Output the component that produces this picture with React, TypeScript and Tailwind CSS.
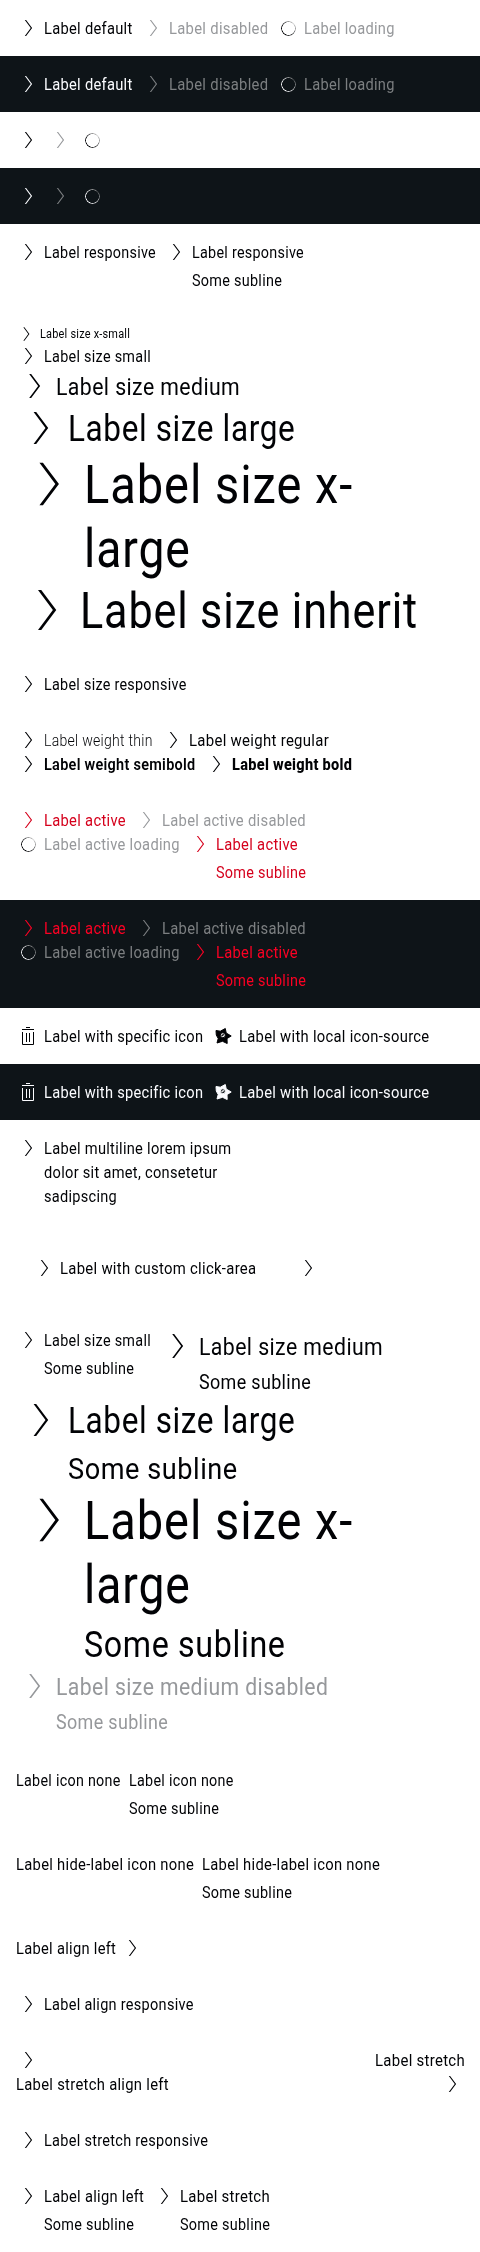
import { useLayoutEffect, useRef, useState, type ReactNode } from "react";

/* Single line of text condensed or widened to the given advance width. */
function Fit({ w, children, className = "" }: { w: number; children: string; className?: string }) {
  const ref = useRef<HTMLSpanElement>(null);
  const [scale, setScale] = useState(1);
  useLayoutEffect(() => {
    if (ref.current) setScale(w / ref.current.offsetWidth);
  }, [w]);
  return (
    <span className={`block whitespace-nowrap ${className}`} style={{ width: w }}>
      <span
        ref={ref}
        className="inline-block origin-left align-top tracking-[0.02em]"
        style={{ transform: `scaleX(${scale})` }}
      >
        {children}
      </span>
    </span>
  );
}

type Size = "xs" | "sm" | "md" | "lg" | "xl" | "inherit";
type IconName = "chevron" | "spinner" | "trash" | "star" | "none";

const boxClass: Record<Size, string> = {
  xs: "size-5",
  sm: "size-6",
  md: "size-9",
  lg: "size-12",
  xl: "size-16",
  inherit: "size-15",
};
const textClass: Record<Size, string> = {
  xs: "text-[12.5px] leading-5",
  sm: "translate-y-px text-[16px] leading-6",
  md: "translate-y-px text-[24px] leading-9",
  lg: "text-[37.5px] leading-12",
  xl: "translate-y-px text-[54px] leading-16",
  inherit: "translate-y-px text-[49.5px] leading-15",
};
const subClass: Record<Size, string> = {
  xs: "text-[12px] leading-5",
  sm: "translate-y-px pt-1 text-[16px] leading-6",
  md: "pt-1 text-[20px] leading-7",
  lg: "translate-y-px pt-1 text-[30px] leading-10",
  xl: "translate-y-px pt-1 text-[37px] leading-12",
  inherit: "",
};

function Icon({ name, size }: { name: IconName; size: Size }) {
  if (name === "none") return null;
  const box = `${boxClass[size]} block shrink-0`;
  if (name === "spinner")
    return (
      <span className={`${box} p-[5px] pb-1`}>
        <span className="block size-[15px] rounded-full bg-[conic-gradient(from_40deg,#9b9b9b55_0deg,currentColor_170deg,currentColor_230deg,#9b9b9bcc_340deg,#9b9b9b88_360deg)] mask-[radial-gradient(circle,transparent_6.1px,black_6.7px)]" />
      </span>
    );
  if (name === "trash")
    return (
      <svg viewBox="0 0 24 24" className={box} fill="none" stroke="currentColor">
        <path d="M10 3.5h4M6 5.5h12M6.5 8v12.5h11V8M10.5 9v9M13.5 9v9" />
      </svg>
    );
  if (name === "star")
    return (
      <svg viewBox="0 0 24 24" className={box} fill="currentColor">
        <path
          fillRule="evenodd"
          stroke="currentColor"
          strokeLinejoin="round"
          strokeWidth="1"
          d="M5 6.5 9.3 7.2 14.3 4.5 15.2 9 20.2 12 16 14.500 16.200 19.500 11.500 17.300 6 19 7.200 14.500 5.300 11zM9.300 11.200a2.500 2.500 0 1 0 5 0 2.500 2.500 0 0 0-5 0z"
        />
        <path d="M10.400 10.700h1.200v-.9h1.200v1.600h-1v.8h-1.400z" />
      </svg>
    );
  return (
    <svg viewBox="0 0 24 24" className={box} fill="currentColor">
      <path d="M8.800 4h1.300L16.100 12l-6 8H8.800l5.950-8z" />
    </svg>
  );
}

type LinkProps = {
  lines?: [string, number][];
  sub?: number;
  size?: Size;
  icon?: IconName;
  color?: string;
  iconColor?: string;
  weight?: string;
  className?: string;
};

function PureLink({
  lines = [],
  sub,
  size = "sm",
  icon = "chevron",
  color = "",
  iconColor = "",
  weight = "font-normal",
  className = "",
}: LinkProps) {
  return (
    <a className={`flex items-start gap-1 ${color} ${className}`}>
      {icon !== "none" && (
        <span className={iconColor}>
          <Icon name={icon} size={size} />
        </span>
      )}
      {lines.length > 0 && (
        <span className={weight}>
          {lines.map(([t, w]) => (
            <Fit key={t} w={w} className={textClass[size]}>
              {t}
            </Fit>
          ))}
          {sub && (
            <Fit w={sub} className={subClass[size]}>
              Some subline
            </Fit>
          )}
        </span>
      )}
    </a>
  );
}

function Section({ dark, className = "", children }: { dark?: boolean; className?: string; children: ReactNode }) {
  return (
    <div className={`p-4 ${dark ? "bg-[#0e1418] text-[#fbfcff]" : "bg-white text-[#010205]"} ${className}`}>{children}</div>
  );
}

const Row = ({ children, className = "" }: { children: ReactNode; className?: string }) => (
  <div className={`flex items-start gap-2 ${className}`}>{children}</div>
);

const mutedOf = (dark?: boolean) => (dark ? "text-[#7c7f81]" : "text-[#96989b]");

function States({ dark }: { dark?: boolean }) {
  const m = mutedOf(dark);
  return (
    <Section dark={dark}>
      <Row>
        <PureLink lines={[["Label default", 89]]} />
        <PureLink lines={[["Label disabled", 99]]} color={m} />
        <PureLink
          lines={[["Label loading", 90.5]]}
          icon="spinner"
          color={m}
          iconColor={dark ? "text-[#fbfcff]" : "text-[#010205]"}
        />
      </Row>
    </Section>
  );
}

function HiddenLabels({ dark }: { dark?: boolean }) {
  return (
    <Section dark={dark}>
      <Row>
        <PureLink />
        <PureLink color={mutedOf(dark)} />
        <PureLink icon="spinner" />
      </Row>
    </Section>
  );
}

function Active({ dark }: { dark?: boolean }) {
  const m = mutedOf(dark);
  const red = dark ? "text-[#fc0023]" : "text-[#d5001c]";
  return (
    <Section dark={dark}>
      <Row>
        <PureLink lines={[["Label active", 82]]} color={red} />
        <PureLink lines={[["Label active disabled", 144]]} color={m} />
      </Row>
      <Row>
        <PureLink
          lines={[["Label active loading", 136]]}
          icon="spinner"
          color={m}
          iconColor={dark ? "text-[#fbfcff]" : "text-[#010205]"}
        />
        <PureLink lines={[["Label active", 82]]} sub={90} color={red} />
      </Row>
    </Section>
  );
}

function CustomIcons({ dark }: { dark?: boolean }) {
  return (
    <Section dark={dark}>
      <Row>
        <PureLink icon="trash" lines={[["Label with specific icon", 159]]} />
        <PureLink icon="star" lines={[["Label with local icon-source", 190]]} />
      </Row>
    </Section>
  );
}

export default function App() {
  return (
    <main className="w-[480px] bg-white font-['Roboto',sans-serif]">
      <States />
      <States dark />
      <HiddenLabels />
      <HiddenLabels dark />
      <Section>
        <Row>
          <PureLink lines={[["Label responsive", 112]]} />
          <PureLink lines={[["Label responsive", 112]]} sub={90} />
        </Row>
      </Section>
      <Section>
        <PureLink size="xs" lines={[["Label size x-small", 90]]} />
        <PureLink size="sm" lines={[["Label size small", 107]]} />
        <PureLink size="md" lines={[["Label size medium", 184]]} />
        <PureLink size="lg" lines={[["Label size large", 227.5]]} />
        <PureLink size="xl" lines={[["Label size x-", 269], ["large", 107]]} />
        <PureLink size="inherit" lines={[["Label size inherit", 338]]} />
      </Section>
      <Section>
        <PureLink lines={[["Label size responsive", 142.5]]} />
      </Section>
      <Section>
        <Row>
          <PureLink weight="font-light" lines={[["Label weight thin", 108.7]]} />
          <PureLink lines={[["Label weight regular", 140]]} />
        </Row>
        <Row>
          <PureLink weight="font-semibold" lines={[["Label weight semibold", 151.7]]} />
          <PureLink weight="font-extrabold" lines={[["Label weight bold", 120]]} />
        </Row>
      </Section>
      <Active />
      <Active dark />
      <CustomIcons />
      <CustomIcons dark />
      <Section>
        <PureLink
          lines={[
            ["Label multiline lorem ipsum", 187.5],
            ["dolor sit amet, consetetur", 173.5],
            ["sadipscing", 72.7],
          ]}
        />
      </Section>
      <Section>
        <Row>
          <PureLink className="p-4" lines={[["Label with custom click-area", 196]]} />
          <PureLink className="p-4" />
        </Row>
      </Section>
      <Section>
        <Row>
          <PureLink lines={[["Label size small", 107]]} sub={90} />
          <PureLink size="md" lines={[["Label size medium", 184]]} sub={112} />
        </Row>
        <PureLink size="lg" lines={[["Label size large", 227.5]]} sub={170} />
        <PureLink size="xl" lines={[["Label size x-", 269], ["large", 107]]} sub={202} />
        <PureLink size="md" lines={[["Label size medium disabled", 272.5]]} sub={112} color={mutedOf()} />
      </Section>
      <Section>
        <Row>
          <PureLink icon="none" lines={[["Label icon none", 104.7]]} />
          <PureLink icon="none" lines={[["Label icon none", 104.7]]} sub={90} />
        </Row>
      </Section>
      <Section>
        <Row>
          <PureLink icon="none" lines={[["Label hide-label icon none", 178]]} />
          <PureLink icon="none" lines={[["Label hide-label icon none", 178]]} sub={90} />
        </Row>
      </Section>
      <Section>
        <PureLink className="flex-row-reverse justify-end" lines={[["Label align left", 100]]} />
      </Section>
      <Section>
        <PureLink lines={[["Label align responsive", 149.5]]} />
      </Section>
      <Section>
        <PureLink className="justify-between" lines={[["Label stretch", 89.5]]} />
        <PureLink className="flex-row-reverse justify-between" lines={[["Label stretch align left", 152.5]]} />
      </Section>
      <Section>
        <PureLink lines={[["Label stretch responsive", 164]]} />
      </Section>
      <Section>
        <Row>
          <PureLink lines={[["Label align left", 100]]} sub={90} />
          <PureLink lines={[["Label stretch", 89.5]]} sub={90} />
        </Row>
      </Section>
    </main>
  );
}
